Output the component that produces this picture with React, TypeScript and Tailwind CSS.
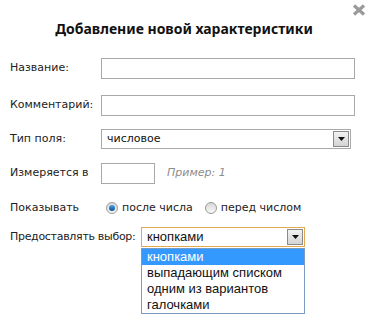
import React from "react";

const label = "w-[91px] shrink-0 text-[11px] text-[#222]";
const box = "h-[21px] border border-[#a9a9a9] bg-white";

function Arrow() {
  return (
    <span className="flex h-[16px] w-[16px] items-center justify-center border border-[#8a8a8a] bg-gradient-to-b from-[#f2f2f2] to-[#d4d4d4]">
      <svg width="7" height="4" viewBox="0 0 7 4">
        <path d="M0 0h7L3.5 4z" fill="#111" />
      </svg>
    </span>
  );
}

function Radio({ checked }: { checked?: boolean }) {
  return (
    <span className="flex h-[12px] w-[12px] items-center justify-center rounded-full border border-[#9a9a9a] bg-gradient-to-b from-[#d8d8d8] to-[#f8f8f8]">
      {checked && <span className="h-[6px] w-[6px] rounded-full bg-gradient-to-b from-[#4aa3e8] to-[#0b4f94]" />}
    </span>
  );
}

export default function App() {
  return (
    <div className="relative h-[314px] w-[368px] overflow-hidden bg-white font-['DejaVu_Sans',sans-serif]">
      <svg className="absolute right-[2px] top-[4px]" width="14" height="12" viewBox="0 0 14 12">
        <path d="M2 1.5L12 10.5M12 1.5L2 10.5" stroke="#9a9a9a" strokeWidth="3.2" />
      </svg>

      <h2 className="pt-[19px] text-center font-['Noto_Sans',sans-serif] text-[14px] font-bold leading-[20px] text-[#111]">
        Добавление новой характеристики
      </h2>

      <div className="mt-[19px] flex flex-col pl-[10px]">
        <div className="flex items-center">
          <span className={label}>Название:</span>
          <div className={`${box} w-[254px]`} />
        </div>

        <div className="mt-[16px] flex items-center">
          <span className={label}>Комментарий:</span>
          <div className={`${box} w-[254px]`} />
        </div>

        <div className="mt-[13px] flex items-center">
          <span className={label}>Тип поля:</span>
          <div className="flex h-[20px] w-[250px] items-center justify-between border border-[#a9a9a9] pl-[5px] pr-[1px] text-[11px] text-[#111]">
            <span>числовое</span>
            <Arrow />
          </div>
        </div>

        <div className="mt-[14px] flex items-center">
          <span className={label}>Измеряется в</span>
          <div className={`${box} w-[54px]`} />
          <span className="ml-[12px] text-[11px] italic text-[#8c8c8c]">Пример: 1</span>
        </div>

        <div className="mt-[16px] flex h-[16px] items-center">
          <span className={label}>Показывать</span>
          <div className="ml-[5px] flex items-center gap-[4px] text-[11px] text-[#222]">
            <Radio checked />
            <span>после числа</span>
            <span className="ml-[4px]" />
            <Radio />
            <span>перед числом</span>
          </div>
        </div>

        <div className="mt-[11px] flex items-center">
          <span className="w-[131px] shrink-0 whitespace-nowrap text-[11px] tracking-[-0.3px] text-[#222]">Предоставлять выбор:</span>
          <div className="relative">
            <div className="flex h-[20px] w-[164px] items-center justify-between border border-[#e3a94e] pl-[5px] pr-[1px] font-['Liberation_Sans',sans-serif] text-[13px] text-[#111]">
              <span>кнопками</span>
              <Arrow />
            </div>
            <ul className="absolute left-0 top-[21px] w-[164px] border border-[#7a9cc2] bg-white font-['Liberation_Sans',sans-serif] text-[13px] leading-[16px] text-[#111]">
              <li className="bg-[#3399ff] pl-[5px] text-white">кнопками</li>
              <li className="pl-[5px]">выпадающим списком</li>
              <li className="pl-[5px]">одним из вариантов</li>
              <li className="pl-[5px]">галочками</li>
            </ul>
          </div>
        </div>
      </div>
    </div>
  );
}
